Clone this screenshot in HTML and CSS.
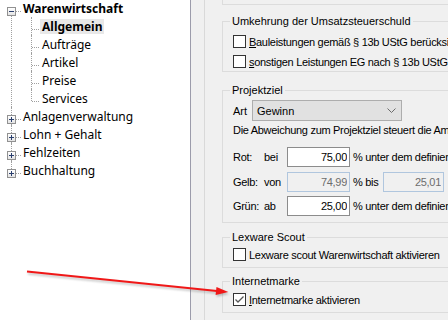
FILE: index.html
```html
<!DOCTYPE html>
<html lang="de">
<head>
  <meta charset="UTF-8" />
  <title>Einstellungen</title>
  <link rel="stylesheet" href="styles.css">
</head>
<body>
  <div class="window">

    <!-- Navigation -->
    <ul class="tree">
      <li class="node">
        <div class="row"><span class="toggle minus"></span><span class="label strong">Warenwirtschaft</span></div>
        <ul class="children">
          <li><div class="row"><span class="label strong selected">Allgemein</span></div></li>
          <li><div class="row"><span class="label">Aufträge</span></div></li>
          <li><div class="row"><span class="label">Artikel</span></div></li>
          <li><div class="row"><span class="label">Preise</span></div></li>
          <li><div class="row"><span class="label">Services</span></div></li>
        </ul>
      </li>
      <li class="node"><div class="row"><span class="toggle plus"></span><span class="label">Anlagenverwaltung</span></div></li>
      <li class="node"><div class="row"><span class="toggle plus"></span><span class="label">Lohn + Gehalt</span></div></li>
      <li class="node"><div class="row"><span class="toggle plus"></span><span class="label">Fehlzeiten</span></div></li>
      <li class="node"><div class="row"><span class="toggle plus"></span><span class="label">Buchhaltung</span></div></li>
    </ul>

    <!-- Settings page -->
    <div class="page">
      <div class="content">
        <div class="group group-cut"></div>

        <fieldset class="group g-umkehr">
          <legend>Umkehrung der Umsatzsteuerschuld</legend>
          <label class="check"><span class="box"></span><span><u>B</u>auleistungen gemäß § 13b UStG berücksichtigen</span></label>
          <label class="check"><span class="box"></span><span><u>s</u>onstigen Leistungen EG nach § 13b UStG berücksichtigen</span></label>
        </fieldset>

        <fieldset class="group g-ziel">
          <legend>Projektziel</legend>
          <div class="art-row">
            <span class="art-label">Art</span>
            <div class="combo">
              <span>Gewinn</span>
              <svg width="9" height="5" viewBox="0 0 9 5"><polyline points="0.5,0.5 4.5,4.5 8.5,0.5" fill="none" stroke="#6b6b6b" stroke-width="1"/></svg>
            </div>
          </div>
          <div class="note">Die Abweichung zum Projektziel steuert die Ampel wie folgt:</div>

          <div class="limit-row rot">
            <span class="lim-name">Rot:</span><span class="lim-word">bei</span>
            <input class="num" type="text" value="75,00">
            <span class="lim-after">% unter dem definierten Projektziel</span>
          </div>
          <div class="limit-row gelb">
            <span class="lim-name">Gelb:</span><span class="lim-word">von</span>
            <input class="num" type="text" value="74,99" disabled>
            <span class="lim-bis">% bis</span>
            <input class="num num-wide" type="text" value="25,01" disabled>
          </div>
          <div class="limit-row gruen">
            <span class="lim-name">Grün:</span><span class="lim-word">ab</span>
            <input class="num" type="text" value="25,00">
            <span class="lim-after">% unter dem definierten Projektziel</span>
          </div>
        </fieldset>

        <fieldset class="group g-scout">
          <legend>Lexware Scout</legend>
          <label class="check"><span class="box"></span><span>Lexware scout Warenwirtschaft aktivieren</span></label>
        </fieldset>

        <fieldset class="group g-marke">
          <legend>Internetmarke</legend>
          <label class="check"><span class="box"><svg width="11" height="11" viewBox="0 0 11 11"><polyline points="1.5,5.5 4,8 9.5,2.5" fill="none" stroke="#555" stroke-width="1.3"/></svg></span><span><u>I</u>nternetmarke aktivieren</span></label>
        </fieldset>
      </div>
    </div>
  </div>

  <!-- annotation arrow -->
  <svg class="arrow" width="448" height="320" viewBox="0 0 448 320">
    <defs>
      <filter id="soft" x="-10%" y="-50%" width="120%" height="200%">
        <feGaussianBlur stdDeviation="0.8"/>
      </filter>
    </defs>
    <g filter="url(#soft)" opacity="0.35">
      <line x1="28" y1="273.5" x2="217" y2="292.8" stroke="#555" stroke-width="2"/>
      <polygon points="229,294 216.6,296.8 217.4,288.8" fill="#555"/>
    </g>
    <line x1="27" y1="271.5" x2="217" y2="290.9" stroke="#f01818" stroke-width="2"/>
    <polygon points="228.3,292 215.6,295 216.5,287" fill="#f01818"/>
  </svg>
</body>
</html>
```

FILE: styles.css
```css
:root {
  --tree-line: #a0a0a0;
  --group-border: #dcdcdc;
  --panel: #f0f0f0;
}

body {
  margin: 0;
  width: 448px;
  height: 320px;
  overflow: hidden;
  position: relative;
  font-family: 'Liberation Sans', Arial, sans-serif;
  font-size: 11px;
  color: #000;
}

.window {
  display: flex;
  height: 320px;
}

/* ---- tree ---- */

.tree {
  width: 190px;
  flex: none;
  margin: 0;
  padding: 0;
  list-style: none;
  background: #fff;
  border-right: 1px solid #9c9cab;
  font-family: 'Noto Sans', sans-serif;
  font-size: 12px;
  color: #000;
}

.tree li {
  position: relative;
}

.tree > li:first-child {
  margin-top: -1px;
}

.row {
  position: relative;
  height: 18px;
  display: flex;
  align-items: center;
  padding-left: 21px;
}

.label {
  display: inline-block;
  line-height: 15px;
  padding: 0 2px;
  white-space: nowrap;
}

.strong {
  font-weight: bold;
}

.selected {
  background: #e8e8e8;
}

/* vertical guide of the root level */
.tree > li::before {
  content: '';
  position: absolute;
  left: 11px;
  top: 0;
  bottom: 0;
  border-left: 1px dotted var(--tree-line);
}

.tree > li:first-child::before {
  top: 12px;
}

.tree > li:last-child::before {
  bottom: auto;
  height: 12px;
}

.tree > li > .row::before {
  content: '';
  position: absolute;
  left: 12px;
  top: 12px;
  width: 9px;
  border-top: 1px dotted var(--tree-line);
}

.toggle {
  position: absolute;
  left: 7px;
  top: 8px;
  width: 9px;
  height: 9px;
  box-sizing: border-box;
  border: 1px solid #919191;
  background: linear-gradient(#ffffff, #e4e4e4);
  z-index: 1;
}

.toggle::before {
  content: '';
  position: absolute;
  left: 1px;
  top: 3px;
  width: 5px;
  height: 1px;
  background: #2a3f6e;
}

.plus::after {
  content: '';
  position: absolute;
  left: 3px;
  top: 1px;
  width: 1px;
  height: 5px;
  background: #2a3f6e;
}

.children {
  list-style: none;
  margin: 0;
  padding: 0;
}

.children .row {
  padding-left: 40px;
}

.children li::before {
  content: '';
  position: absolute;
  left: 31px;
  top: 0;
  bottom: 0;
  border-left: 1px dotted var(--tree-line);
}

.children li:last-child::before {
  bottom: auto;
  height: 12px;
}

.children .row::before {
  content: '';
  position: absolute;
  left: 32px;
  top: 12px;
  width: 7px;
  border-top: 1px dotted var(--tree-line);
}

/* ---- settings page ---- */

.page {
  flex: 1;
  min-width: 0;
  background: var(--panel);
  padding-left: 13px;
}

.content {
  height: 100%;
  border-left: 1px solid #d9d9d9;
  padding-left: 17px;
}

.group {
  width: 260px;
  box-sizing: border-box;
  margin: 0;
  padding: 0;
  min-width: 0;
  border: 1px solid var(--group-border);
}

.group legend {
  margin-left: 7px;
  padding: 0 2px;
  line-height: 13px;
}

.group-cut {
  height: 5px;
  border-top: none;
}

.g-umkehr {
  margin-top: 10px;
  padding: 7px 0 3px;
}

.g-umkehr .check + .check {
  margin-top: 7px;
}

.g-ziel {
  margin-top: 12px;
  padding: 3px 0 6px;
}

.g-scout {
  margin-top: 8px;
  padding: 4px 0 6px;
}

.g-marke {
  margin-top: 7px;
  padding: 5px 0 6px;
}

.check {
  display: flex;
  align-items: center;
  height: 13px;
  padding-left: 10px;
  white-space: nowrap;
  letter-spacing: -0.3px;
}

.box {
  width: 13px;
  height: 13px;
  flex: none;
  box-sizing: border-box;
  border: 1px solid #333;
  background: #fff;
  margin-right: 3px;
  display: flex;
  align-items: center;
  justify-content: center;
}

.art-row {
  display: flex;
  align-items: center;
  padding-left: 10px;
}

.art-label {
  width: 19px;
  flex: none;
}

.combo {
  width: 150px;
  height: 21px;
  flex: none;
  box-sizing: border-box;
  border: 1px solid #adadad;
  background: #e1e1e1;
  display: flex;
  align-items: center;
  justify-content: space-between;
  padding: 0 5px 0 4px;
}

.note {
  margin-top: 3px;
  padding-left: 10px;
  line-height: 13px;
  white-space: nowrap;
  letter-spacing: -0.3px;
}

.limit-row {
  display: flex;
  align-items: center;
  padding-left: 10px;
  height: 20px;
  white-space: nowrap;
  letter-spacing: -0.3px;
}

.limit-row > * {
  flex: none;
}

.rot {
  margin-top: 10px;
}

.gelb {
  margin-top: 5px;
}

.gruen {
  margin-top: 4px;
}

.lim-name {
  width: 31px;
}

.lim-word {
  width: 23px;
}

.num {
  width: 63px;
  height: 20px;
  box-sizing: border-box;
  margin: 0;
  border: 1px solid #8c8c8c;
  background: #fff;
  padding: 0 2px;
  text-align: right;
  font-family: 'Liberation Sans', Arial, sans-serif;
  font-size: 11px;
  letter-spacing: -0.3px;
  color: #000;
}

.num:disabled {
  background: var(--panel);
  border-color: #b0c6de;
  color: #6d6d6d;
}

.lim-after {
  margin-left: 3px;
}

.lim-bis {
  margin-left: 3px;
  width: 30px;
}

.num-wide {
  width: 61px;
}

.arrow {
  position: absolute;
  left: 0;
  top: 0;
  pointer-events: none;
}
```
